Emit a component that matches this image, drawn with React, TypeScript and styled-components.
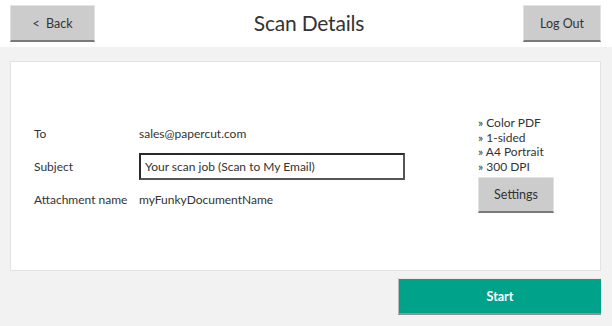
import React from "react";
import styled, { createGlobalStyle } from "styled-components";

const Global = createGlobalStyle`
  html, body { margin: 0; padding: 0; }
  body {
    background: #f2f2f2;
    font-family: Lato, "Open Sans", sans-serif;
    color: #2b2b2b;
  }
`;

const Page = styled.div`
  width: 612px;
  height: 326px;
  display: flex;
  flex-direction: column;
  background: #f2f2f2;
`;

const Header = styled.header`
  height: 47px;
  box-sizing: border-box;
  background: #ffffff;
  display: flex;
  align-items: flex-start;
  justify-content: space-between;
  padding: 5px 11px 0 10px;
`;

const Title = styled.h1`
  margin: 0;
  font-weight: 400;
  font-size: 21px;
  letter-spacing: -0.2px;
  line-height: 35px;
  color: #333;
`;

const GrayButton = styled.button<{ $w: number; $h: number }>`
  width: ${(p) => p.$w}px;
  height: ${(p) => p.$h}px;
  box-sizing: border-box;
  background: #cccccc;
  border: 1px solid #e2e2e2;
  border-bottom: 2px solid #7a7a7a;
  font-family: inherit;
  font-size: 12.5px;
  color: #333;
  padding: 0;
  cursor: pointer;
`;

const Main = styled.main`
  flex: 1;
  display: flex;
  flex-direction: column;
  padding: 14px 11px 0 10px;
`;

const Card = styled.section`
  height: 210px;
  box-sizing: border-box;
  background: #ffffff;
  border: 1px solid #e3e3e3;
  display: flex;
  align-items: flex-start;
  padding: 54px 0 0 23px;
`;

const Form = styled.div`
  display: grid;
  grid-template-columns: 105px 266px;
  grid-auto-rows: 33px;
  align-items: center;
  font-size: 12px;
  margin-top: 1px;
`;

const Label = styled.span`
  color: #333;
`;

const Value = styled.span`
  color: #333;
`;

const Input = styled.div`
  height: 27px;
  box-sizing: border-box;
  border: 2px solid #2a2a2a;
  border-right-color: #555;
  border-bottom-color: #555;
  padding: 0 4px;
  display: flex;
  align-items: center;
  color: #333;
`;

const Aside = styled.div`
  margin-left: 73px;
  display: flex;
  flex-direction: column;
  font-size: 12px;
  line-height: 14.5px;
  color: #333;
`;

const Option = styled.span`
  display: block;
  height: 14.5px;
`;

const SettingsWrap = styled.div`
  margin-top: 3px;
`;

const Footer = styled.div`
  display: flex;
  justify-content: flex-end;
  margin-top: 7px;
`;

const StartButton = styled.button`
  width: 203px;
  height: 37px;
  box-sizing: border-box;
  background: #00a38a;
  border: none;
  border-left: 1px solid #b8b8b8;
  border-top: 1px solid #e8e8e8;
  border-bottom: 2px solid #9a8c96;
  color: #ffffff;
  font-family: inherit;
  font-weight: 700;
  font-size: 12.5px;
  cursor: pointer;
`;

export default function App() {
  return (
    <>
      <Global />
      <Page>
        <Header>
          <GrayButton $w={85} $h={37}>&lt;&nbsp; Back</GrayButton>
          <Title>Scan Details</Title>
          <GrayButton $w={78} $h={37}>Log Out</GrayButton>
        </Header>
        <Main>
          <Card>
            <Form>
              <Label>To</Label>
              <Value>sales@papercut.com</Value>
              <Label>Subject</Label>
              <Input>Your scan job (Scan to My Email)</Input>
              <Label>Attachment name</Label>
              <Value>myFunkyDocumentName</Value>
            </Form>
            <Aside>
              <Option>» Color PDF</Option>
              <Option>» 1-sided</Option>
              <Option>» A4 Portrait</Option>
              <Option>» 300 DPI</Option>
              <SettingsWrap>
                <GrayButton $w={76} $h={36}>Settings</GrayButton>
              </SettingsWrap>
            </Aside>
          </Card>
          <Footer>
            <StartButton>Start</StartButton>
          </Footer>
        </Main>
      </Page>
    </>
  );
}
